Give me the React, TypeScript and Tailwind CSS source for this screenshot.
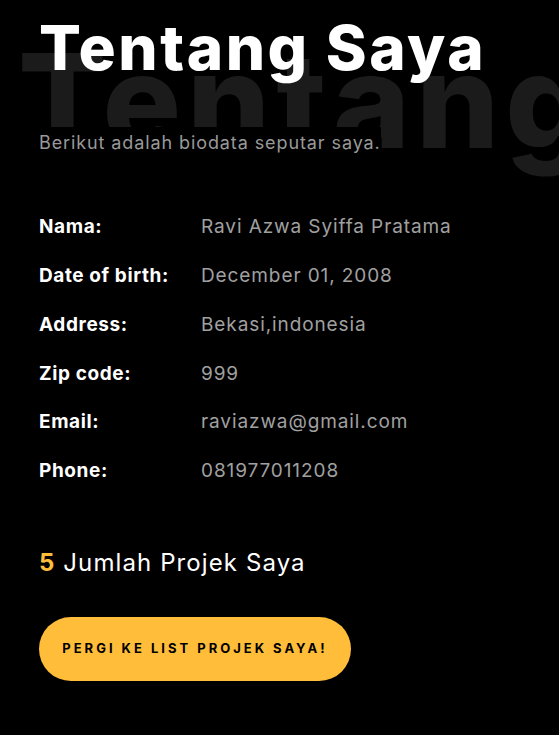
import React from "react";

const rows: [string, string][] = [
  ["Nama:", "Ravi Azwa Syiffa Pratama"],
  ["Date of birth:", "December 01, 2008"],
  ["Address:", "Bekasi,indonesia"],
  ["Zip code:", "999"],
  ["Email:", "raviazwa@gmail.com"],
  ["Phone:", "081977011208"],
];

export default function App() {
  return (
    <div
      className="min-h-[735px] w-full bg-black overflow-hidden"
      style={{ fontFamily: "Inter, 'Noto Sans', sans-serif" }}
    >
      <div className="relative px-[39px] pt-[12px]">
        <div className="absolute left-[18px] top-[35px] text-[131px] font-extrabold leading-none tracking-[6px] text-[#1b1b1b] whitespace-nowrap select-none">
          Tentang
        </div>
        <h1 className="relative text-[62px] font-extrabold leading-[72px] tracking-[2.5px] text-white whitespace-nowrap">
          Tentang Saya
        </h1>
        <p className="relative mt-[43px] inline-block bg-black pt-[4px] text-[18px] leading-[24px] tracking-[0.9px] text-[#999999]">
          Berikut adalah biodata seputar saya.
        </p>
      </div>
      <div className="px-[39px] pt-[48px]">
        {rows.map(([k, v]) => (
          <div key={k} className="flex h-[48.8px] items-center">
            <div className="w-[162px] text-[19px] font-bold tracking-[0.6px] text-white">{k}</div>
            <div className="text-[19px] tracking-[0.9px] text-[#a0a0a0]">{v}</div>
          </div>
        ))}
      </div>
      <div className="px-[39px] pt-[51px]">
        <div className="text-[24px] leading-[32px] tracking-[1.1px] text-white">
          <span className="font-bold text-[#ffbd39]">5</span> Jumlah Projek Saya
        </div>
        <button className="mt-[38px] h-[64px] w-[312px] rounded-full bg-[#ffbd39] text-[13px] font-bold uppercase tracking-[3px] text-black">
          Pergi ke list projek saya!
        </button>
      </div>
    </div>
  );
}
